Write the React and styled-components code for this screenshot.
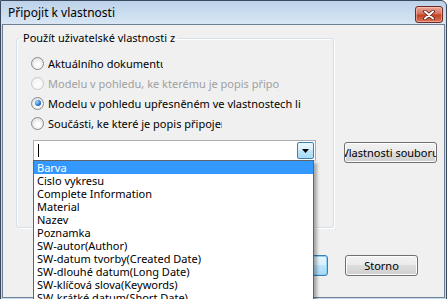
import React from 'react'
import styled, { createGlobalStyle } from 'styled-components'

const GlobalStyle = createGlobalStyle`
  html, body { margin: 0; padding: 0; background: #fff; overflow: hidden; }
  body { font-family: "Noto Sans", "DejaVu Sans", sans-serif; font-size: 11px; color: #000; }
`

const Window = styled.div`
  width: 447px;
  height: 301px;
  box-sizing: border-box;
  display: flex;
  flex-direction: column;
  border: 1px solid #3a4a5c;
  border-radius: 0 6px 0 0;
  background: linear-gradient(#bcd2ea, #d8e6f4 23px, #c9dbee 24px);
`

const TitleBar = styled.div`
  height: 23px;
  display: flex;
  align-items: center;
  justify-content: space-between;
  padding: 0 3px 0 7px;
  font-size: 12px;
`

const CloseButton = styled.div`
  width: 28px;
  height: 17px;
  box-sizing: border-box;
  margin-top: 4px;
  display: flex;
  align-items: center;
  justify-content: center;
  border: 1px solid #6f2b22;
  border-radius: 3px;
  background: linear-gradient(#eaa99b, #d46c57 48%, #c2401f 52%, #d9765c);
  box-shadow: inset 0 0 0 1px rgba(255, 220, 210, 0.45);
`

const Client = styled.div`
  flex: 1;
  margin: 0 1px 2px 1px;
  border: 1px solid #6d7f93;
  background: #f0f0f0;
  display: flex;
  flex-direction: column;
  padding: 6px 0 0 13px;
`

const TopRow = styled.div`
  display: flex;
  gap: 10px;
  align-items: flex-start;
`

const GroupBox = styled.fieldset`
  margin: 0;
  padding: 0;
  width: 318px;
  height: 197px;
  box-sizing: border-box;
  border: 1px solid #d5dfe5;
  border-radius: 3px;
  box-shadow: inset 1px 1px 0 #fff, 1px 1px 0 #fff;
`

const Legend = styled.legend`
  margin-left: 3px;
  padding: 0 3px;
  line-height: 14px;
  font-size: 11px;
`

const Options = styled.div`
  display: flex;
  flex-direction: column;
  padding: 8px 0 0 14px;
`

const OptionRow = styled.div`
  height: 20px;
  display: flex;
  align-items: center;
  gap: 4px;
  color: ${p => (p.$disabled ? '#a0a0a0' : '#000')};
`

const Radio = styled.span`
  position: relative;
  width: 13px;
  height: 13px;
  flex: none;
  box-sizing: border-box;
  border-radius: 50%;
  border: 1px solid ${p => (p.$disabled ? '#c9c9c9' : '#8b8b8b')};
  background: ${p =>
    p.$disabled
      ? 'radial-gradient(circle at 55% 60%, #fbfbfb 25%, #ececec 100%)'
      : 'radial-gradient(circle at 55% 60%, #fefefe 20%, #e4e4e4 70%, #cdcdcd 100%)'};

  &::after {
    content: '';
    display: ${p => (p.$checked ? 'block' : 'none')};
    position: absolute;
    left: 2.5px;
    top: 2.5px;
    width: 6px;
    height: 6px;
    border-radius: 50%;
    background: radial-gradient(circle at 35% 35%, #a9e3ff, #2a76d6 55%, #0d3b8a);
  }
`

const Label = styled.span`
  width: ${p => p.$clip}px;
  overflow: hidden;
  white-space: nowrap;
`

const Combo = styled.div`
  position: relative;
  margin: 7px 0 0 16px;
  width: 283px;
  height: 21px;
  box-sizing: border-box;
  display: flex;
  align-items: stretch;
  border: 1px solid #abadb3;
  border-bottom-color: #c3d7ea;
  background: #fff;
  padding: 1px;
`

const Field = styled.div`
  flex: 1;
  display: flex;
  align-items: center;
  padding-left: 3px;
`

const Caret = styled.span`
  width: 1px;
  height: 13px;
  background: #000;
`

const DropButton = styled.div`
  width: 17px;
  box-sizing: border-box;
  display: flex;
  align-items: center;
  justify-content: center;
  border: 1px solid #3c7fb1;
  border-radius: 2px;
  background: linear-gradient(#eaf6fd, #d9f0fc 45%, #bee6fd 50%, #a7d9f5);
`

const List = styled.ul`
  position: absolute;
  left: -1px;
  top: 100%;
  width: 281px;
  height: 140px;
  margin: 0;
  padding: 0;
  list-style: none;
  box-sizing: border-box;
  border: 1px solid #646464;
  background: #fff;
  box-shadow: 3px 3px 3px rgba(0, 0, 0, 0.3);
  overflow: hidden;
  z-index: 2;
`

const Item = styled.li`
  height: 13px;
  line-height: 13px;
  padding-left: 3px;
  white-space: nowrap;
  background: ${p => (p.$selected ? '#3399ff' : 'transparent')};
  color: ${p => (p.$selected ? '#fff' : '#000')};
`

const SideColumn = styled.div`
  padding-top: 111px;
`

const Button = styled.div`
  width: ${p => p.$w}px;
  height: 21px;
  box-sizing: border-box;
  display: flex;
  align-items: center;
  justify-content: center;
  overflow: hidden;
  white-space: nowrap;
  border: 1px solid ${p => (p.$default ? '#3c7fb1' : '#707070')};
  border-radius: 3px;
  background: ${p =>
    p.$default
      ? 'linear-gradient(#eaf6fd, #d9f0fc 45%, #bee6fd 50%, #a7d9f5)'
      : 'linear-gradient(#f2f2f2, #ebebeb 45%, #dddddd 50%, #cfcfcf)'};
  box-shadow: inset 0 0 0 1px ${p => (p.$default ? '#8ed2f5' : '#fcfcfc')};
`

const BottomRow = styled.div`
  display: flex;
  justify-content: flex-end;
  gap: 17px;
  margin-top: 27px;
  padding-right: 26px;
`

const options = [
  { text: 'Aktuálního dokumentu', clip: 115 },
  { text: 'Modelu v pohledu, ke kterému je popis připojen', clip: 231, disabled: true },
  { text: 'Modelu v pohledu upřesněném ve vlastnostech listu', clip: 253, checked: true },
  { text: 'Součásti, ke které je popis připojen', clip: 174 },
]

const items = [
  'Barva',
  'Cislo vykresu',
  'Complete Information',
  'Material',
  'Nazev',
  'Poznamka',
  'SW-autor(Author)',
  'SW-datum tvorby(Created Date)',
  'SW-dlouhé datum(Long Date)',
  'SW-klíčová slova(Keywords)',
  'SW-krátké datum(Short Date)',
]

const App = () => {
  return (
    <>
      <GlobalStyle />
      <Window>
        <TitleBar>
          <span>Připojit k vlastnosti</span>
          <CloseButton>
            <svg width="12" height="10" viewBox="0 0 12 10">
              <path d="M2 1.5 L10 8.5 M10 1.5 L2 8.5" stroke="#5a1a10" strokeWidth="3.6" strokeLinecap="round" />
              <path d="M2 1.5 L10 8.5 M10 1.5 L2 8.5" stroke="#fff" strokeWidth="2" strokeLinecap="round" />
            </svg>
          </CloseButton>
        </TitleBar>
        <Client>
          <TopRow>
            <GroupBox>
              <Legend>Použít uživatelské vlastnosti z</Legend>
              <Options>
                {options.map(o => (
                  <OptionRow key={o.text} $disabled={o.disabled}>
                    <Radio $disabled={o.disabled} $checked={o.checked} />
                    <Label $clip={o.clip}>{o.text}</Label>
                  </OptionRow>
                ))}
              </Options>
              <Combo>
                <Field>
                  <Caret />
                </Field>
                <DropButton>
                  <svg width="7" height="4" viewBox="0 0 7 4">
                    <path d="M0 0 H7 L3.5 4 Z" fill="#000" />
                  </svg>
                </DropButton>
                <List>
                  {items.map((t, i) => (
                    <Item key={t} $selected={i === 0}>{t}</Item>
                  ))}
                </List>
              </Combo>
            </GroupBox>
            <SideColumn>
              <Button $w={93}>Vlastnosti souboru</Button>
            </SideColumn>
          </TopRow>
          <BottomRow>
            <Button $w={73} $default>OK</Button>
            <Button $w={73}>Storno</Button>
          </BottomRow>
        </Client>
      </Window>
    </>
  )
}

export default App
